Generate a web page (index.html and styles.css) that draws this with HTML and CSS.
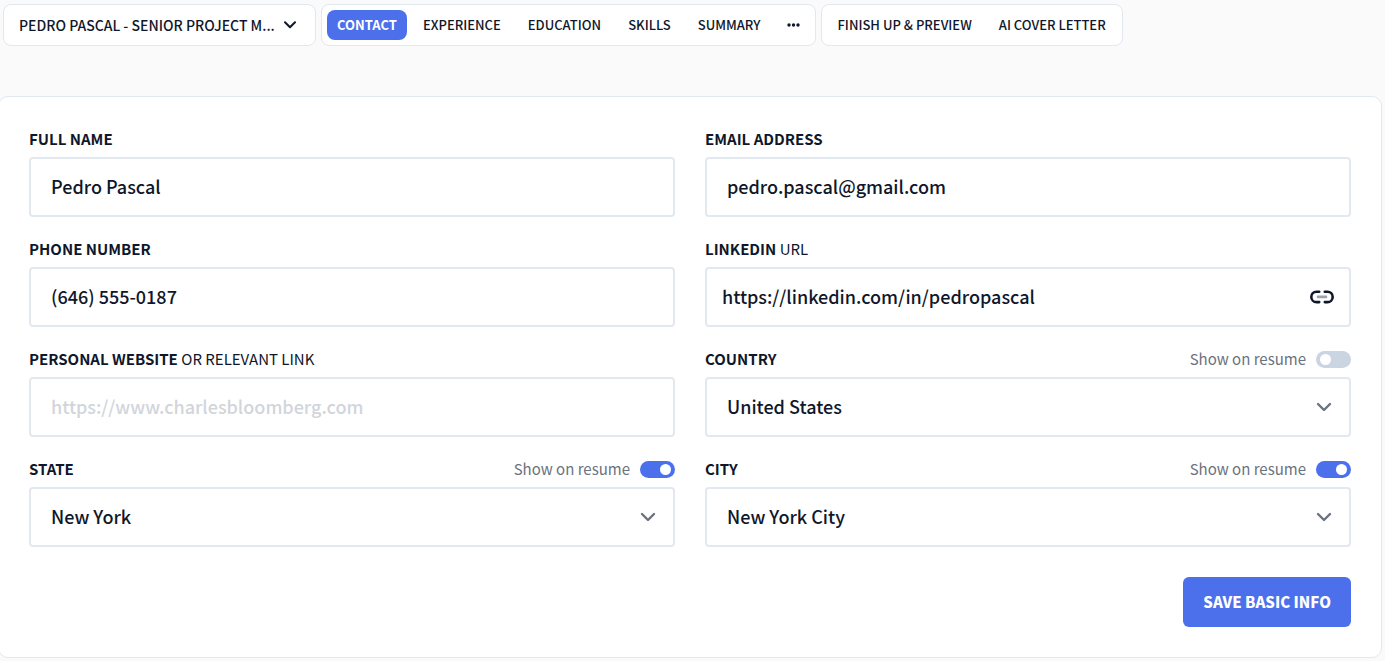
FILE: index.html
```html
<!DOCTYPE html>
<html lang="en">
<head>
  <meta charset="UTF-8">
  <meta name="viewport" content="width=device-width, initial-scale=1.0">
  <title>Contact - Resume Editor</title>
  <link rel="stylesheet" href="styles.css">
</head>
<body>
  <header class="topbar">
    <div class="resume-picker">
      <select aria-label="Resume">
        <option>PEDRO PASCAL - SENIOR PROJECT M...</option>
      </select>
      <svg class="picker-arrow" viewBox="0 0 12 8" aria-hidden="true"><path d="M1 1.2l5 5 5-5"/></svg>
    </div>
    <nav class="tabs">
      <a href="#contact" class="active">CONTACT</a>
      <a href="#experience">EXPERIENCE</a>
      <a href="#education">EDUCATION</a>
      <a href="#skills">SKILLS</a>
      <a href="#summary">SUMMARY</a>
      <button type="button" class="more" aria-label="More sections">
        <svg viewBox="0 0 13 4" aria-hidden="true"><circle cx="2" cy="2" r="1.7"/><circle cx="6.5" cy="2" r="1.7"/><circle cx="11" cy="2" r="1.7"/></svg>
      </button>
    </nav>
    <nav class="tabs">
      <a href="#finish">FINISH UP &amp; PREVIEW</a>
      <a href="#cover-letter">AI COVER LETTER</a>
    </nav>
  </header>

  <main class="card">
    <form class="contact-form">
      <div class="field">
        <div class="field-head"><label for="fullName">FULL NAME</label></div>
        <input type="text" id="fullName" class="control" value="Pedro Pascal">
      </div>

      <div class="field">
        <div class="field-head"><label for="email">EMAIL ADDRESS</label></div>
        <input type="email" id="email" class="control" value="pedro.pascal@gmail.com">
      </div>

      <div class="field">
        <div class="field-head"><label for="phone">PHONE NUMBER</label></div>
        <input type="tel" id="phone" class="control" value="(646) 555-0187">
      </div>

      <div class="field">
        <div class="field-head"><label for="linkedin">LINKEDIN <span>URL</span></label></div>
        <div class="control-wrap">
          <input type="url" id="linkedin" class="control control-link" value="https://linkedin.com/in/pedropascal">
          <svg class="link-icon" viewBox="0 0 24 14" aria-hidden="true">
            <path class="link-ring" d="M9.200 1.700H6.500a5.200 5.200 0 0 0 0 10.400H9.200M14.800 1.700h2.700a5.200 5.200 0 0 1 0 10.400H14.800"/>
            <path class="link-bar" d="M8 6.900h8"/>
          </svg>
        </div>
      </div>

      <div class="field">
        <div class="field-head"><label for="website">PERSONAL WEBSITE <span>OR RELEVANT LINK</span></label></div>
        <input type="url" id="website" class="control" placeholder="https://www.charlesbloomberg.com">
      </div>

      <div class="field">
        <div class="field-head">
          <label for="country">COUNTRY</label>
          <label class="toggle">Show on resume <input type="checkbox"></label>
        </div>
        <div class="control-wrap">
          <select id="country" class="control"><option>United States</option></select>
          <svg class="arrow" viewBox="0 0 16 10" aria-hidden="true"><path d="M2 2l6 6 6-6"/></svg>
        </div>
      </div>

      <div class="field">
        <div class="field-head">
          <label for="state">STATE</label>
          <label class="toggle">Show on resume <input type="checkbox" checked></label>
        </div>
        <div class="control-wrap">
          <select id="state" class="control"><option>New York</option></select>
          <svg class="arrow" viewBox="0 0 16 10" aria-hidden="true"><path d="M2 2l6 6 6-6"/></svg>
        </div>
      </div>

      <div class="field">
        <div class="field-head">
          <label for="city">CITY</label>
          <label class="toggle">Show on resume <input type="checkbox" checked></label>
        </div>
        <div class="control-wrap">
          <select id="city" class="control"><option>New York City</option></select>
          <svg class="arrow" viewBox="0 0 16 10" aria-hidden="true"><path d="M2 2l6 6 6-6"/></svg>
        </div>
      </div>

      <button type="button" class="save">SAVE BASIC INFO</button>
    </form>
  </main>
</body>
</html>
```

FILE: styles.css
```css
* {
  box-sizing: border-box;
}
body {
  margin: 0;
  background: #fafafa;
  color: #0f172a;
  font-family: "Noto Sans CJK SC", "Noto Sans", sans-serif;
  font-size: 15px;
  line-height: 20px;
}
input, select, button {
  font-family: inherit;
  color: inherit;
}
svg {
  fill: none;
  stroke-linecap: round;
  stroke-linejoin: round;
}

/* top navigation */
.topbar {
  display: flex;
  gap: 5px;
  padding: 4px 3px 0;
}
.resume-picker, .tabs {
  display: flex;
  align-items: center;
  height: 42px;
  background: white;
  border: 1px solid #e2e8f0;
  border-radius: 8px;
  font-size: 13px;
  font-weight: 500;
  white-space: nowrap;
}
.resume-picker {
  position: relative;
  width: 313px;
}
.resume-picker select {
  appearance: none;
  width: 100%;
  height: 100%;
  padding: 0 40px 0 15px;
  border: none;
  background: none;
  font-size: 14px;
  font-weight: 500;
}
.picker-arrow {
  position: absolute;
  right: 19px;
  width: 12px;
  height: 8px;
  stroke: #0f172a;
  stroke-width: 2;
  pointer-events: none;
}
.tabs {
  gap: 5px;
  padding: 0 5px;
}
.tabs a {
  padding: 5px 11px;
  border-radius: 8px;
  color: inherit;
  text-decoration: none;
}
.tabs .active {
  padding: 5px 10px;
  background: #4c70eb;
  color: white;
  font-weight: bold;
}
.more {
  display: flex;
  padding: 10px;
  border: none;
  background: none;
}
.more svg {
  width: 13px;
  height: 4px;
  fill: #0f172a;
}

/* contact card, its left edge runs off the page */
.card {
  margin: 50px 3px 3px -2px;
  padding: 32px 30px 30px;
  background: white;
  border: 1px solid #e2e8f0;
  border-radius: 10px;
}
.contact-form {
  display: grid;
  grid-template-columns: 1fr 1fr;
  gap: 22px 30px;
}
.field-head {
  display: flex;
  justify-content: space-between;
  margin-bottom: 8px;
  font-weight: bold;
}
.field-head span {
  font-weight: normal;
}
.control-wrap {
  position: relative;
}
.control {
  display: block;
  appearance: none;
  width: 100%;
  height: 60px;
  padding: 0 20px 2px;
  border: 2px solid #e2e8f0;
  border-radius: 4px;
  background: white;
  font-size: 18px;
  font-weight: 500;
}
.control::placeholder {
  color: #d1d5db;
}
.control-link {
  padding: 0 50px 2px 15px;
}
.arrow, .link-icon {
  position: absolute;
  top: 0;
  bottom: 0;
  margin: auto 0;
  pointer-events: none;
}
.arrow {
  right: 19px;
  width: 16px;
  height: 10px;
  stroke: #6b7280;
  stroke-width: 2.4;
}
.link-icon {
  right: 17px;
  width: 24px;
  height: 14px;
}
.link-ring {
  stroke: #0f172a;
  stroke-width: 2.6;
}
.link-bar {
  stroke: #9ca3af;
  stroke-width: 2.6;
}

/* switches */
.toggle {
  display: flex;
  align-items: center;
  gap: 10px;
  color: #6b7280;
  font-weight: normal;
}
.toggle input {
  appearance: none;
  display: flex;
  width: 35px;
  height: 17px;
  margin: 0;
  padding: 3px 4px;
  border-radius: 9px;
  background: #cbd5e1;
}
.toggle input::before {
  content: "";
  width: 11px;
  height: 11px;
  border-radius: 50%;
  background: white;
}
.toggle input:checked {
  justify-content: flex-end;
  background: #4c70eb;
}

.save {
  grid-column: 1 / -1;
  justify-self: end;
  height: 50px;
  margin-top: 8px;
  padding: 0 20px 2px;
  border: none;
  border-radius: 6px;
  background: #4c70eb;
  color: white;
  font-size: 15px;
  font-weight: 900;
  cursor: pointer;
}
```
